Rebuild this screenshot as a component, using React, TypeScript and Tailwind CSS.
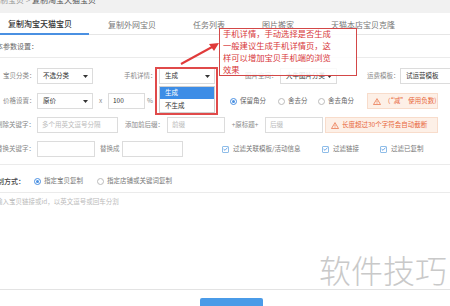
import { ReactNode } from 'react'

const FONT = "font-['Noto_Sans_CJK_SC','Noto_Sans',sans-serif]"

function Caret() {
  return (
    <svg width="5" height="3" viewBox="0 0 5 3" className="shrink-0">
      <path d="M0 0 L5 0 L2.5 3 Z" fill="#333" />
    </svg>
  )
}

function Lbl({ className = '', children }: { className?: string; children: ReactNode }) {
  return <span className={`shrink-0 whitespace-nowrap text-[6.5px] text-[#888] ${className}`}>{children}</span>
}

function Sel({ className = '', text }: { className?: string; text: string }) {
  return (
    <div className={`shrink-0 h-[16px] border border-[#dcdcdc] bg-white flex items-center justify-between pl-[5px] pr-[4px] text-[6.5px] text-[#333] ${className}`}>
      <span className="whitespace-nowrap">{text}</span>
      <Caret />
    </div>
  )
}

function Inp({ className = '', ph, val }: { className?: string; ph?: string; val?: string }) {
  return (
    <div className={`shrink-0 h-[16px] border border-[#dcdcdc] bg-white flex items-center px-[4px] text-[6.5px] whitespace-nowrap ${className}`}>
      {val ? <span className="text-[#333]">{val}</span> : <span className="text-[#bbb]">{ph}</span>}
    </div>
  )
}

function Radio({ on }: { on?: boolean }) {
  return (
    <span className={`shrink-0 w-[7px] h-[7px] rounded-full border flex items-center justify-center bg-white ${on ? 'border-[#4a90e2]' : 'border-[#bbb]'}`}>
      {on && <span className="w-[3px] h-[3px] rounded-full bg-[#4a90e2]" />}
    </span>
  )
}

function Check() {
  return (
    <span className="shrink-0 w-[7px] h-[7px] border border-[#8fbde8] rounded-[1px] bg-white flex items-center justify-center">
      <svg width="5" height="4" viewBox="0 0 5 4">
        <path d="M0.5 2 L2 3.3 L4.5 0.6" stroke="#4a90e2" strokeWidth="0.8" fill="none" />
      </svg>
    </span>
  )
}

function Warn({ className = '', children }: { className?: string; children: ReactNode }) {
  return (
    <div className={`shrink-0 h-[16px] bg-[#fdf0e7] border border-[#f8dccb] flex items-center pl-[5px] gap-[3px] text-[6.5px] text-[#e8683d] whitespace-nowrap ${className}`}>
      <svg width="8" height="7" viewBox="0 0 8 7">
        <path d="M4 0.6 L7.5 6.5 L0.5 6.5 Z" stroke="#e8683d" strokeWidth="0.7" fill="none" />
        <path d="M4 2.6 L4 4.6 M4 5.3 L4 5.9" stroke="#e8683d" strokeWidth="0.7" />
      </svg>
      {children}
    </div>
  )
}

const TABS = ['复制外网宝贝', '任务列表', '图片搬家', '天猫本店宝贝克隆']

export default function App() {
  return (
    <div className={`relative w-[450px] h-[306px] overflow-hidden bg-white ${FONT}`}>
      {/* breadcrumb */}
      <div className="h-[13px] bg-[#f1f1f1] overflow-hidden">
        <div className="-mt-[5px] text-[8px] leading-[10px] whitespace-nowrap">
          <span className="text-[#999]">制宝贝 &gt; </span>
          <span className="text-[#555]">复制淘宝天猫宝贝</span>
        </div>
      </div>

      {/* tabs */}
      <div className="h-[22px] border-b border-[#e6e6e6] flex text-[8px]">
        <div className="w-[89px] h-[22px] -mb-px border-b-2 border-[#4a90e2] flex items-center pl-[8px] pt-[2px] text-[#333] font-medium whitespace-nowrap">
          复制淘宝天猫宝贝
        </div>
        <div className="flex gap-[37px] pl-[19px]">
          {TABS.map(t => (
            <div key={t} className="flex items-center pt-[3px] text-[#777] whitespace-nowrap">{t}</div>
          ))}
        </div>
      </div>

      {/* section title */}
      <div className="h-[23px] border-b border-[#ebebeb] flex items-center">
        <span className="-ml-[4px] text-[7px] text-[#666] whitespace-nowrap">本参数设置：</span>
      </div>

      {/* form rows */}
      <div className="pt-[10px] pb-[7px] border-b border-[#ebebeb]">
        <div className="flex items-center h-[16px]">
          <Lbl className="ml-[3px] w-[34px]">宝贝分类：</Lbl>
          <Sel className="w-[56px]" text="不选分类" />
          <Lbl className="ml-[31px] w-[35px]">手机详情：</Lbl>
          <Sel className="w-[56px]" text="生成" />
          <Lbl className="ml-[30px] w-[35px]">图片空间：</Lbl>
          <Sel className="w-[57px]" text="大牛图片分类" />
          <Lbl className="ml-[30px] w-[33px]">运费模板：</Lbl>
          <Sel className="w-[62px]" text="试运营模板" />
        </div>

        <div className="flex items-center h-[16px] mt-[9px]">
          <Lbl className="ml-[3px] w-[34px]">价格设置：</Lbl>
          <Sel className="w-[56px]" text="原价" />
          <span className="w-[15px] text-center text-[6.5px] text-[#888]">x</span>
          <Inp className="w-[37px]" val="100" />
          <span className="w-[10px] pl-[2px] text-[6.5px] text-[#888]">%</span>
          <div className="ml-[75px] flex items-center text-[6.5px] text-[#666] whitespace-nowrap">
            <div className="w-[48px] flex items-center gap-[3px]"><Radio on />保留角分</div>
            <div className="w-[40px] flex items-center gap-[3px]"><Radio />舍去分</div>
            <div className="w-[49px] flex items-center gap-[3px]"><Radio />舍去角分</div>
          </div>
          <Warn className="w-[71px]">（“减” 使用负数)</Warn>
        </div>

        <div className="flex items-center h-[16px] mt-[8px]">
          <Lbl className="-ml-[4px] w-[41px]">删除关键字：</Lbl>
          <Inp className="w-[81px]" ph="多个用英文逗号分隔" />
          <Lbl className="ml-[7px] w-[42px]">添加前后缀：</Lbl>
          <Inp className="w-[58px]" ph="前缀" />
          <span className="w-[40px] text-center text-[6.5px] text-[#888] whitespace-nowrap">+原标题+</span>
          <Inp className="w-[58px]" ph="后缀" />
          <Warn className="ml-[2px] w-[113px]">长度超过30个字符会自动截断</Warn>
        </div>

        <div className="flex items-center h-[16px] mt-[8px]">
          <Lbl className="-ml-[4px] w-[41px]">替换关键字：</Lbl>
          <Inp className="w-[58px]" />
          <Lbl className="ml-[5px] w-[22px]">替换成</Lbl>
          <Inp className="w-[61px]" />
          <div className="ml-[39px] flex items-center text-[6.5px] text-[#777] whitespace-nowrap">
            <div className="w-[100px] flex items-center gap-[4px]"><Check />过滤关联模板/活动信息</div>
            <div className="w-[58px] flex items-center gap-[4px]"><Check />过滤链接</div>
            <div className="flex items-center gap-[4px]"><Check />过滤已复制</div>
          </div>
        </div>
      </div>

      {/* copy mode */}
      <div className="h-[28px] pt-[5px] border-b border-[#ebebeb] flex items-center text-[6.5px] whitespace-nowrap">
        <span className="-ml-[10px] w-[35px] text-[7px] text-[#444] font-medium">复制方式：</span>
        <div className="ml-[9px] w-[63px] flex items-center gap-[3px] text-[#777]"><Radio on />指定宝贝复制</div>
        <div className="flex items-center gap-[3px] text-[#777]"><Radio />指定店铺或关键词复制</div>
      </div>

      {/* link textarea */}
      <div className="h-[97px] border-b border-[#e3e3e3] pt-[3px]">
        <span className="-ml-[4px] block text-[6.5px] leading-[10px] text-[#bbb] whitespace-nowrap">输入宝贝链接或id，以英文逗号或回车分割</span>
      </div>

      <div className="pt-[8px] pl-[200px]">
        <div className="w-[63px] h-[12px] bg-[#4a9be8] rounded-t-[2px]" />
      </div>

      {/* dropdown open */}
      <div className="absolute left-[159px] top-[86px] w-[56px] h-[27px] bg-white border border-[#d0d0d0] text-[6.5px]">
        <div className="h-[12px] bg-[#3d8de6] text-white flex items-center pl-[5px]">生成</div>
        <div className="h-[13px] text-[#333] flex items-center pl-[5px]">不生成</div>
      </div>
      <div className="absolute left-[155px] top-[67px] w-[63px] h-[48px] border-2 border-[#e04a4a]" />

      {/* callout */}
      <div className="absolute left-[219px] top-[28px] w-[138px] h-[48px] border border-[#d34848] bg-white/85 overflow-hidden">
        <div className="-mt-[2px] pl-[3px] text-[8.3px] leading-[12px] text-[#d8383a] whitespace-nowrap">
          <div>手机详情，手动选择是否生成</div>
          <div>一般建议生成手机详情页，这</div>
          <div>样可以增加宝贝手机端的浏览</div>
          <div>效果</div>
        </div>
      </div>
      <svg className="absolute left-0 top-0" width="450" height="306">
        <line x1="181" y1="64" x2="213" y2="46.5" stroke="#e03a3a" strokeWidth="2" />
        <polygon points="219,43 209,44 214,51" fill="#e03a3a" />
      </svg>

      {/* watermark */}
      <div className="absolute left-[315px] top-[249px] bg-white pl-[4px] pr-[4px] text-[32px] leading-[40px] text-[#c9c9c9] font-light whitespace-nowrap">
        软件技巧
      </div>
    </div>
  )
}
